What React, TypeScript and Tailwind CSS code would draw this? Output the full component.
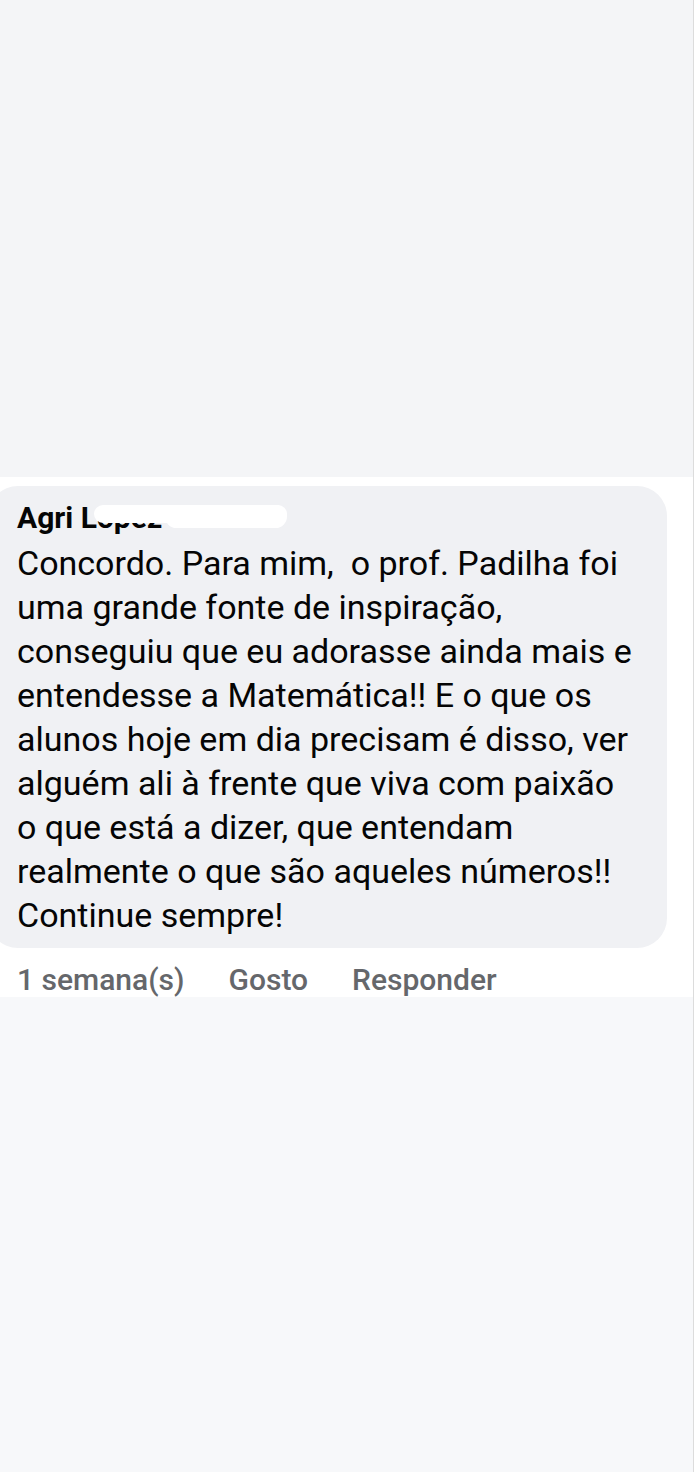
import React from "react";

const font = { fontFamily: "Roboto, 'Noto Sans', Arial, sans-serif" };

function CommentBubble() {
  return (
    <div className="ml-[-12px] mt-[9px] w-[679px] rounded-[30px] bg-[#f0f1f4] pl-[29px] pr-4 pt-[16px] pb-[11px]">
      <div className="relative h-[32px] text-[30px] leading-[32px] font-bold text-[#050505]">
        Agri Lopez
        {/* redaction marks over the surname */}
        <span className="absolute left-[77px] top-[3px] h-[18px] w-[193px] rounded-full bg-white" />
        <span className="absolute left-[148px] top-[3px] h-[23px] w-[122px] rounded-full bg-white" />
      </div>
      <p className="mt-[7px] text-[34px] leading-[44px] text-[#050505]">
        Concordo. Para mim,&nbsp; o prof. Padilha foi
        <br />
        uma grande fonte de inspiração,
        <br />
        conseguiu que eu adorasse ainda mais e
        <br />
        entendesse a Matemática!! E o que os
        <br />
        alunos hoje em dia precisam é disso, ver
        <br />
        alguém ali à frente que viva com paixão
        <br />
        o que está a dizer, que entendam
        <br />
        realmente o que são aqueles números!!
        <br />
        Continue sempre!
      </p>
    </div>
  );
}

export default function App() {
  return (
    <div style={font} className="w-[694px] h-[1472px] overflow-hidden border-r border-[#dcdcdc] bg-[#f4f5f7] flex flex-col">
      <div className="h-[477px] shrink-0" />
      <div className="bg-white h-[520px] shrink-0">
        <CommentBubble />
        <div className="mt-[14px] flex items-center pl-[17px] text-[30px] leading-[36px] font-medium text-[#65676b]">
          <span>1 semana(s)</span>
          <span className="ml-[44px]">Gosto</span>
          <span className="ml-[44px]">Responder</span>
        </div>
      </div>
      <div className="flex-1 bg-[#f7f8fa]" />
    </div>
  );
}
